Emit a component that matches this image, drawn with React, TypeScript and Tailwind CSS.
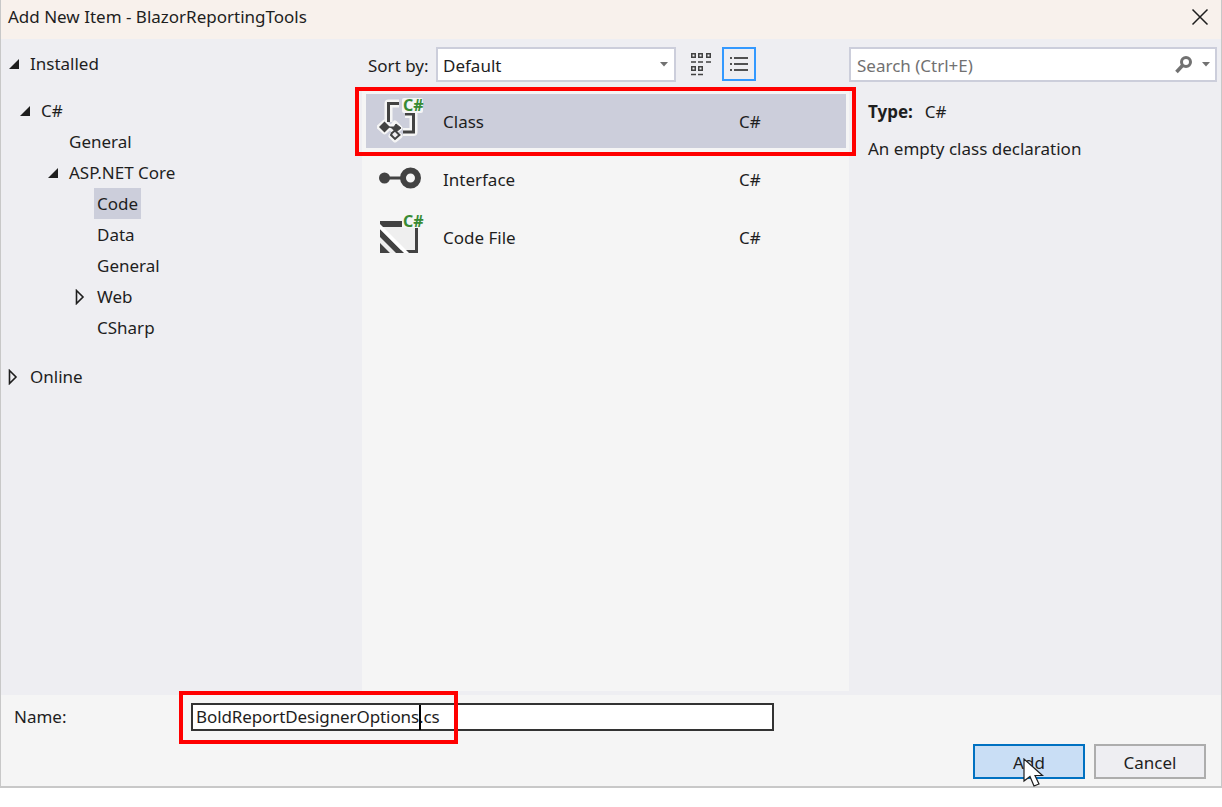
import React from "react";

const font = "font-['Noto_Sans','Open_Sans',sans-serif]";

function Open() {
  return (
    <svg width="12" height="12" viewBox="0 0 12 12" className="shrink-0">
      <path d="M1 11 L11 1 V11 Z" fill="#1e1e1e" />
    </svg>
  );
}
function Closed() {
  return (
    <svg width="10" height="16" viewBox="0 0 10 16" className="shrink-0">
      <path d="M1.500 1.500 L8 8 L1.500 14.500 Z" fill="none" stroke="#1e1e1e" strokeWidth="1.600" />
    </svg>
  );
}

function TreeRow({ indent, arrow, label, selected }: { indent: string; arrow?: "open" | "closed"; label: string; selected?: boolean }) {
  return (
    <div className={`flex h-[31px] items-center ${indent}`}>
      {arrow && <div className="flex w-[22px] shrink-0 items-center">{arrow === "open" ? <Open /> : <Closed />}</div>}
      <span className={selected ? "flex h-[31px] items-center bg-[#cccedb] px-[3px]" : ""}>{label}</span>
    </div>
  );
}

function ClassIcon() {
  return (
    <svg width="50" height="54" viewBox="0 0 50 54">
      <g fill="none" stroke="#f5f5f5" strokeWidth="8" strokeLinejoin="round">
        <path d="M22 9.500 H11.500 V28 M28 20 H36.500 V38 H26" />
        <path d="M7.500 28 L13 33 L7.500 38 L2 33 Z M18 29 L23 34 L18 38 L14 34 Z M18 38 L23 42 L18 46 L14 42 Z" strokeWidth="5" fill="#f5f5f5" />
      </g>
      <path d="M22 9.500 H11.500 V28 M28 20 H36.500 V38 H26" fill="none" stroke="#424242" strokeWidth="3" />
      <rect x="25" y="4" width="21" height="15" rx="2" fill="#f5f5f5" />
      <path d="M7.500 27.500 L13 33 L7.500 38.500 L2 33 Z" fill="#424242" />
      <path d="M12 33 H17 L19 30 L24 34 L19 38 L15.500 35" fill="#424242" stroke="#424242" strokeWidth="1" />
      <path d="M15 39 L18 36.500 L22.500 41 L18 45 L14 41 Z" fill="#f0eff1" stroke="#424242" strokeWidth="2" />
      <text x="26" y="16.500" fontSize="16" fontWeight="700" fill="#388a34" fontFamily="'Noto Sans',sans-serif">C#</text>
    </svg>
  );
}

function InterfaceIcon() {
  return (
    <svg width="50" height="54" viewBox="0 0 50 54">
      <circle cx="7.500" cy="26" r="5.500" fill="#424242" />
      <rect x="10" y="24.500" width="15" height="3" fill="#424242" />
      <circle cx="33.500" cy="26" r="7.500" fill="#f5f5f5" stroke="#424242" strokeWidth="6" />
    </svg>
  );
}

function FileIcon() {
  return (
    <svg width="50" height="54" viewBox="0 0 50 54">
      <path d="M3 11 H38 V43 H3 Z" fill="#efefef" />
      <path d="M3 11 H25 V17 H3 Z M38 17 H41 V43 H23 V40 H38 Z M3 19 L27 43 H19 L3 27 Z M3 33 L13 43 H3 Z" fill="#424242" />
      <path d="M3 14 L32 43 H27 L3 19 Z" fill="#ffffff" />
      <path d="M25 6 H46 V18 H25 Z" fill="#f5f5f5" />
      <text x="26" y="16.500" fontSize="16" fontWeight="700" fill="#388a34" fontFamily="'Noto Sans',sans-serif">C#</text>
    </svg>
  );
}

function ListRow({ icon, label, selected }: { icon: React.ReactNode; label: string; selected?: boolean }) {
  return (
    <div className={`flex h-[54px] items-center ${selected ? "bg-[#cccedb]" : ""}`}>
      <div className="ml-[11px] w-[66px] shrink-0">{icon}</div>
      <span className="w-[296px] pt-[2px]">{label}</span>
      <span className="pt-[2px]">C#</span>
    </div>
  );
}

export default function App() {
  return (
    <div className={`relative h-[807px] w-[1222px] overflow-hidden bg-white text-[17px] text-[#1e1e1e] ${font}`}>
      <div className="flex h-[788px] flex-col border-b-2 border-l border-r border-[#c8c8c8]">
        <div className="flex h-[39px] shrink-0 items-center justify-between bg-[#f8f1ec] pl-[7px] pr-[12px]">
          <span className="pb-[6px]">Add New Item - BlazorReportingTools</span>
          <svg width="18" height="18" viewBox="0 0 18 18" className="mb-[6px]">
            <path d="M1.500 1.500 L16.500 16.500 M16.500 1.500 L1.500 16.500" stroke="#1e1e1e" strokeWidth="1.500" />
          </svg>
        </div>

        <div className="flex h-[656px] shrink-0 bg-[#eeeef2]">
          <div className="w-[361px] shrink-0 pt-[9px]">
            <TreeRow indent="pl-[7px]" arrow="open" label="Installed" />
            <div className="mt-[16px]">
              <TreeRow indent="pl-[18px]" arrow="open" label="C#" />
              <TreeRow indent="pl-[68px]" label="General" />
              <TreeRow indent="pl-[46px]" arrow="open" label="ASP.NET Core" />
              <TreeRow indent="pl-[93px]" label="Code" selected />
              <TreeRow indent="pl-[96px]" label="Data" />
              <TreeRow indent="pl-[96px]" label="General" />
              <TreeRow indent="pl-[74px]" arrow="closed" label="Web" />
              <TreeRow indent="pl-[96px]" label="CSharp" />
            </div>
            <div className="mt-[18px]">
              <TreeRow indent="pl-[7px]" arrow="closed" label="Online" />
            </div>
          </div>

          <div className="flex w-[487px] shrink-0 flex-col">
            <div className="flex h-[48px] shrink-0 items-start pl-[6px] pt-[8px]">
              <span className="flex h-[35px] w-[68px] items-center pt-[3px]">Sort by:</span>
              <div className="flex h-[35px] w-[240px] items-center justify-between border-2 border-[#cccedb] bg-white pl-[5px] pr-[6px]">
                <span className="pt-[3px]">Default</span>
                <svg width="8" height="5" viewBox="0 0 8 5"><path d="M0 0 H8 L4 4.500 Z" fill="#717171" /></svg>
              </div>
              <svg width="22" height="24" viewBox="0 0 22 24" className="ml-[14px] mt-[5px]" fill="none" stroke="#424242" strokeWidth="1.500">
                <path d="M1.750 1.750 h3.500 v3.500 h-3.500 z M8.750 1.750 h3.500 v3.500 h-3.500 z M16.750 1.750 h3.500 v3.500 h-3.500 z M1.750 14.750 h3.500 v3.500 h-3.500 z M8.750 14.750 h3.500 v3.500 h-3.500 z" />
                <path d="M1 10 h5 M8 10 h5 M16 10 h5 M1 22.500 h5 M8 22.500 h5" />
              </svg>
              <div className="ml-[10px] flex h-[34px] w-[34px] items-center justify-center border-2 border-[#3399ff]">
                <svg width="18" height="14" viewBox="0 0 18 14" stroke="#1e1e1e" strokeWidth="1.400">
                  <path d="M0 1 h2 M0 7 h2 M0 13 h2 M4 1 h14 M4 7 h14 M4 13 h14" />
                </svg>
              </div>
            </div>
            <div className="flex-1 bg-[#f5f5f5] pl-[4px] pr-[3px] pt-[7px]">
              <div className="flex flex-col gap-[4px]">
                <ListRow icon={<ClassIcon />} label="Class" selected />
                <ListRow icon={<InterfaceIcon />} label="Interface" />
                <ListRow icon={<FileIcon />} label="Code File" />
              </div>
            </div>
            <div className="h-[4px] shrink-0" />
          </div>

          <div className="min-w-0 flex-1">
            <div className="flex h-[48px] items-start pt-[8px]">
              <div className="flex h-[35px] w-[368px] items-center justify-between border-2 border-[#cccedb] bg-white pl-[6px] pr-[5px] text-[#717171]">
                <span className="pt-[3px]">Search (Ctrl+E)</span>
                <div className="flex items-center gap-[8px]">
                  <svg width="20" height="20" viewBox="0 0 20 20" fill="none" stroke="#717171">
                    <circle cx="12" cy="7" r="4.500" strokeWidth="3" />
                    <path d="M8.500 10.500 L2.500 17" strokeWidth="3.500" />
                  </svg>
                  <svg width="8" height="5" viewBox="0 0 8 5"><path d="M0 0 H8 L4 4.500 Z" fill="#717171" /></svg>
                </div>
              </div>
            </div>
            <div className="pl-[19px] pt-[12px]">
              <div className="flex h-[26px] items-center gap-[12px]">
                <span className="font-bold">Type:</span>
                <span>C#</span>
              </div>
              <div className="mt-[11px] h-[26px]">An empty class declaration</div>
            </div>
          </div>
        </div>

        <div className="flex-1 bg-[#f5f5f5]">
          <div className="flex h-[49px] items-start pl-[13px] pt-[8px]">
            <span className="flex h-[28px] w-[177px] shrink-0 items-center">Name:</span>
            <div className="flex h-[28px] w-[583px] items-center border-2 border-[#333333] bg-white pl-[3px]">
              <span className="tracking-[-0.1px]">BoldReportDesignerOptions.cs</span>
            </div>
          </div>
          <div className="flex justify-end gap-[9px] pr-[15px]">
            <div className="flex h-[35px] w-[112px] items-center justify-center border-2 border-[#0071c1] bg-[#c9def5] pt-[3px]">Add</div>
            <div className="flex h-[35px] w-[112px] items-center justify-center border-2 border-[#adadad] bg-[#eeeef2] pt-[3px]">Cancel</div>
          </div>
        </div>
      </div>

      <div className="absolute left-[355px] top-[87px] h-[69px] w-[501px] border-4 border-[#ff0000]" />
      <div className="absolute left-[179px] top-[691px] h-[53px] w-[279px] border-4 border-[#ff0000]" />
      <div className="absolute left-[419px] top-[705px] h-[25px] w-[2px] bg-black" />
      <svg className="absolute left-[1023px] top-[758px]" width="22" height="31" viewBox="0 0 22 31">
        <path d="M1 1 V23 L7 18.500 L11 28 L16 26 L12 17.500 H19.500 Z" fill="#ffffff" stroke="#1e1e1e" strokeWidth="1.200" />
      </svg>
    </div>
  );
}
